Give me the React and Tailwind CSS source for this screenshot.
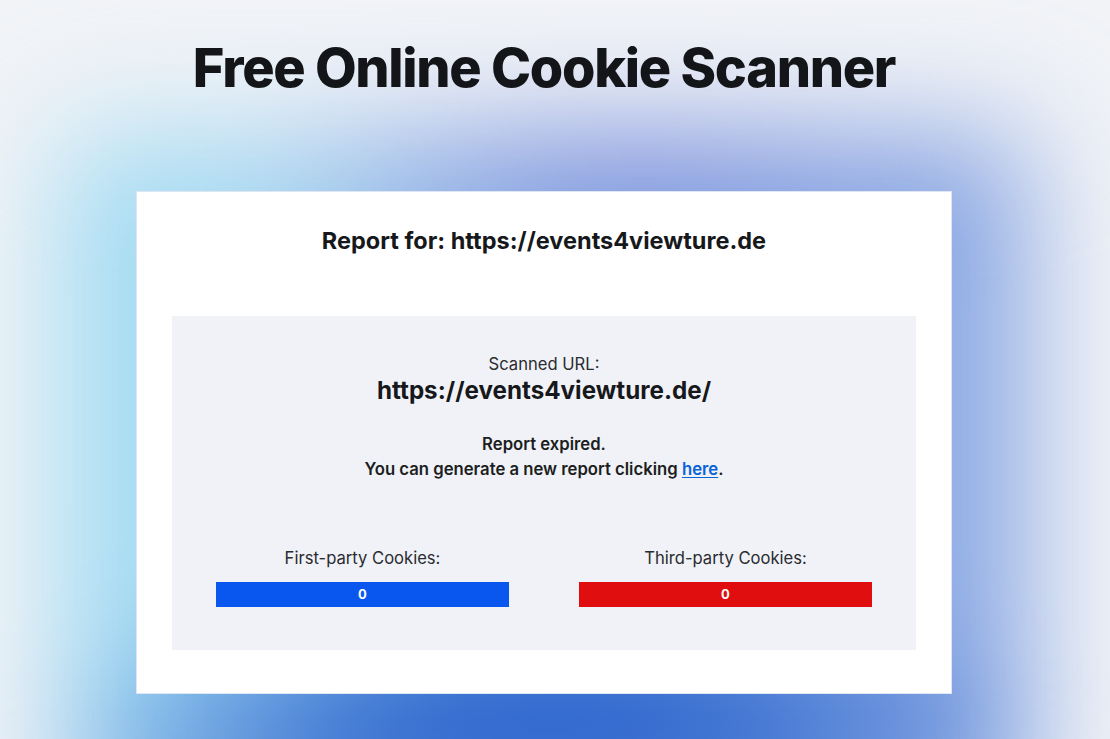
export default function App() {
  return (
    <div className="relative min-h-[739px] w-full overflow-hidden bg-[#f1f3f7] font-['Inter','Liberation_Sans',sans-serif] text-[#17191c]">
      <div className="relative ml-[136px] w-[816px]">
        <h1 className="relative z-10 pt-[33px] text-center text-[54px] font-extrabold leading-[70px] tracking-[-1.3px] text-[#131518]">
          Free Online Cookie Scanner
        </h1>

        <div className="relative mt-[88px]">
          {/* glow behind the card */}
          <div className="pointer-events-none absolute -left-[75px] -right-[75px] -top-[55px] -bottom-[130px] blur-[60px] bg-[radial-gradient(ellipse_55%_40%_at_50%_100%,#154dc4_0%,#2561cc_45%,transparent_100%),radial-gradient(ellipse_40%_30%_at_58%_0%,#6a7fd6_0%,transparent_100%),linear-gradient(90deg,#a0dcf3_0%,#a8d8f1_25%,#a0bdeb_55%,#86a4e2_100%)]" />
          <div className="relative border border-[#dde6f2] bg-white px-[35px] pb-[43px] pt-[34px]">
            <h2 className="text-center text-[23.5px] font-bold leading-[30px] text-[#16181b]">
              Report for: https://events4viewture.de
            </h2>
            <div className="mt-[60px] bg-[#f0f2f7] px-[44px] pb-[43px] pt-[36px]">
              <div className="text-center text-[16.6px] leading-[24px] text-[#2a2c30]">Scanned URL:</div>
              <div className="text-center text-[24.2px] font-bold leading-[30px] text-[#16181b]">
                https://events4viewture.de/
              </div>
              <div className="mt-[26px] text-center text-[16.7px] font-semibold leading-[25px] text-[#1c1e22]">
                <div>Report expired.</div>
                <div>
                  You can generate a new report clicking{' '}
                  <a href="#" className="text-[#0b63d8] underline underline-offset-2">here</a>.
                </div>
              </div>
              <div className="mt-[64px] grid grid-cols-2 gap-[70px]">
                <div>
                  <div className="text-center text-[16.6px] leading-[24px] text-[#2a2c30]">First-party Cookies:</div>
                  <div className="mt-[12px] flex h-[25px] items-center justify-center bg-[#0a57f0] text-[13px] font-bold text-white">
                    0
                  </div>
                </div>
                <div>
                  <div className="text-center text-[16.6px] leading-[24px] text-[#2a2c30]">Third-party Cookies:</div>
                  <div className="mt-[12px] flex h-[25px] items-center justify-center bg-[#e00e0e] text-[13px] font-bold text-white">
                    0
                  </div>
                </div>
              </div>
            </div>
          </div>
        </div>
      </div>
    </div>
  );
}
